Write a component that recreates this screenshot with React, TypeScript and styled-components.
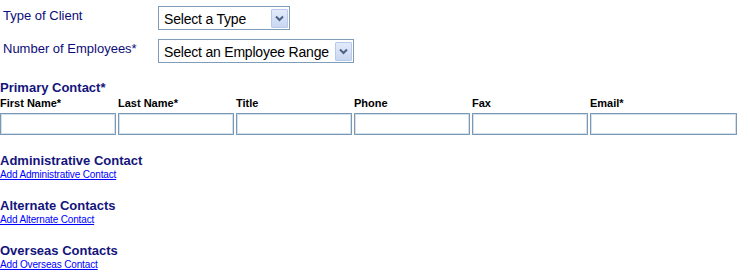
import React from "react";
import styled, { createGlobalStyle } from "styled-components";

const GlobalStyle = createGlobalStyle`
  html, body {
    margin: 0;
    padding: 0;
    background: #ffffff;
    font-family: "Liberation Sans", Arial, sans-serif;
  }
  * { box-sizing: border-box; }
`;

const Page = styled.div`
  padding-top: 6px;
  width: 748px;
`;

const FieldRow = styled.div`
  display: flex;
  align-items: flex-start;
  height: 24px;
  margin-bottom: 9px;
`;

const FieldLabel = styled.div`
  width: 158px;
  padding-left: 3px;
  padding-top: 2px;
  font-size: 13px;
  line-height: 15px;
  color: #0c0c78;
`;

const SelectBox = styled.div<{ $w: number }>`
  width: ${(p) => p.$w}px;
  height: 24px;
  border: 1px solid #7f9db9;
  background: #fff;
  display: flex;
  align-items: stretch;
  padding: 2px 1px 1px 5px;
`;

const SelectText = styled.span`
  flex: 1;
  display: flex;
  align-items: center;
  font-size: 14px;
  letter-spacing: -0.2px;
  color: #000;
  white-space: nowrap;
  padding-top: 1px;
`;

const ArrowButton = styled.span`
  width: 17px;
  border: 1px solid #b7caeb;
  border-radius: 1px;
  background: linear-gradient(#e3ebfa, #c9d7f1);
  display: flex;
  align-items: center;
  justify-content: center;
`;

const Heading = styled.div<{ $lh: number }>`
  font-weight: bold;
  font-size: 13px;
  line-height: ${(p) => p.$lh}px;
  color: #14147c;
`;

const PrimarySection = styled.section`
  margin-top: 17px;
`;

const Columns = styled.div`
  display: flex;
  gap: 2px;
  margin-top: 2px;
`;

const Column = styled.div<{ $w: number }>`
  width: ${(p) => p.$w}px;
  display: flex;
  flex-direction: column;
`;

const ColLabel = styled.div`
  font-weight: bold;
  font-size: 11px;
  line-height: 13px;
  color: #000;
  margin-bottom: 3px;
  white-space: nowrap;
`;

const TextInput = styled.input`
  width: 100%;
  height: 22px;
  border: 1px solid #7b98b5;
  box-shadow: inset 0 0 0 1px #d5dfe9;
  background: #fff;
  padding: 0 3px;
  margin: 0;
  outline: none;
`;

const ContactSections = styled.div`
  margin-top: 19px;
  display: flex;
  flex-direction: column;
  gap: 19px;
`;

const ContactSection = styled.section`
  display: flex;
  flex-direction: column;
  align-items: flex-start;
`;

const AddLink = styled.a`
  margin-top: 1px;
  font-size: 10px;
  line-height: 11px;
  letter-spacing: -0.15px;
  color: #0000ff;
  text-decoration: underline;
`;

const Chevron = () => (
  <svg width="9" height="7" viewBox="0 0 9 7">
    <path d="M1 1.5 L4.5 5 L8 1.5" fill="none" stroke="#4d6185" strokeWidth="2" />
  </svg>
);

const Select = ({ w, text }: { w: number; text: string }) => (
  <SelectBox $w={w}>
    <SelectText>{text}</SelectText>
    <ArrowButton>
      <Chevron />
    </ArrowButton>
  </SelectBox>
);

const columns = [
  { label: "First Name*", w: 116 },
  { label: "Last Name*", w: 116 },
  { label: "Title", w: 116 },
  { label: "Phone", w: 116 },
  { label: "Fax", w: 116 },
  { label: "Email*", w: 147 },
];

const sections = [
  { title: "Administrative Contact", link: "Add Administrative Contact" },
  { title: "Alternate Contacts", link: "Add Alternate Contact" },
  { title: "Overseas Contacts", link: "Add Overseas Contact" },
];

export default function App() {
  return (
    <>
      <GlobalStyle />
      <Page>
        <FieldRow>
          <FieldLabel>Type of Client</FieldLabel>
          <Select w={132} text="Select a Type" />
        </FieldRow>
        <FieldRow>
          <FieldLabel>Number of Employees*</FieldLabel>
          <Select w={196} text="Select an Employee Range" />
        </FieldRow>

        <PrimarySection>
          <Heading $lh={15}>Primary Contact*</Heading>
          <Columns>
            {columns.map((c) => (
              <Column key={c.label} $w={c.w}>
                <ColLabel>{c.label}</ColLabel>
                <TextInput type="text" />
              </Column>
            ))}
          </Columns>
        </PrimarySection>

        <ContactSections>
          {sections.map((s) => (
            <ContactSection key={s.title}>
              <Heading $lh={14}>{s.title}</Heading>
              <AddLink href="#">{s.link}</AddLink>
            </ContactSection>
          ))}
        </ContactSections>
      </Page>
    </>
  );
}
